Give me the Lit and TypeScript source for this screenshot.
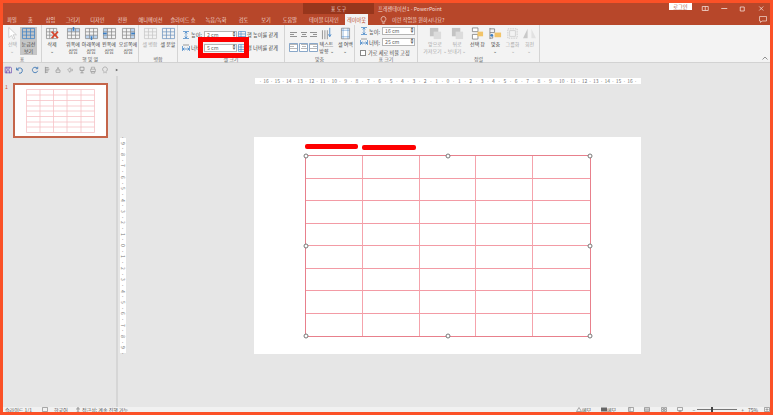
import { LitElement, html, css, svg } from 'lit';
import { customElement } from 'lit/decorators.js';

const tabs = [
  ['파일', 18], ['홈', 19], ['삽입', 21], ['그리기', 24], ['디자인', 25], ['전환', 25],
  ['애니메이션', 31], ['슬라이드 쇼', 34], ['녹음/녹화', 32], ['검토', 23], ['보기', 22], ['도움말', 26],
  ['테이블 디자인', 42], ['레이아웃', 23],
] as const;

const BLUE = '#3b7fc4';
const GREY = '#8a8a8a';
const LIGHT = '#c6c6c6';

// small table glyph: a grid with an optional highlighted band and accent mark
function gridIcon(stroke: string, band = '', accent = '') {
  return svg`<svg class="ico" viewBox="0 0 16 14">
    ${band ? svg`<path d=${band} fill="#bcd4ee"/>` : ''}
    <path d="M1.5 1.5h13v11h-13zM1.5 5.2h13M1.5 8.8h13M5.8 1.5v11M10.2 1.5v11" fill="none" stroke=${stroke} stroke-width=".8"/>
    ${accent ? svg`<path d=${accent} fill="none" stroke=${BLUE} stroke-width="1.6"/>` : ''}
  </svg>`;
}

const deleteIcon = svg`<svg class="ico" viewBox="0 0 16 14">
  <path d="M1.5 1.5h11v11h-11zM1.5 5.2h11M1.5 8.8h11M5 1.5v11M9 1.5v11" fill="none" stroke="#8a8a8a" stroke-width=".8"/>
  <path d="M7 5l7 7M14 5l-7 7" stroke="#d9442b" stroke-width="1.6"/>
</svg>`;

const cursorIcon = svg`<svg class="ico" viewBox="0 0 16 14">
  <path d="M4 .5v11l3-2.4 2 4 1.6-.8-2-3.9h3.6z" fill="#fff" stroke="#c4c4c4" stroke-width=".8"/>
</svg>`;

const stackIcon = svg`<svg class="ico" viewBox="0 0 16 14">
  <rect x="2" y="1" width="9" height="9" fill="#c4c4c4"/><rect x="6" y="5" width="8" height="8" fill="#dcdcdc"/>
</svg>`;

const paneIcon = svg`<svg class="ico" viewBox="0 0 16 14">
  <path d="M2.5 1h6v4h-6zM2.5 8h6v5h-6z" fill="#fff" stroke="#777" stroke-width=".8"/>
  <rect x="8" y="5" width="6" height="5" fill="#f2c469"/>
</svg>`;

const alignIcon = svg`<svg class="ico" viewBox="0 0 16 14">
  <path d="M2 1v12M2 2h5v4h-5M2 9h3v3h-3" fill="none" stroke="#777" stroke-width=".8"/>
  <rect x="7" y="6" width="7" height="5" fill="#f2c469"/><circle cx="4" cy="9" r="1.4" fill="#3b7fc4"/>
</svg>`;

const groupIcon = svg`<svg class="ico" viewBox="0 0 16 14">
  <path d="M3 2h10v10h-10z" fill="none" stroke="#bdbdbd" stroke-width=".8" stroke-dasharray="1.5 1"/>
  <rect x="5" y="4" width="6" height="6" fill="none" stroke="#c8c8c8" stroke-width=".8"/>
</svg>`;

const rotateIcon = svg`<svg class="ico" viewBox="0 0 16 14">
  <path d="M6 2l-5 10h5z" fill="#c9c9c9"/><path d="M10 2l5 10h-5z" fill="#e2e2e2"/>
</svg>`;

const dirIcon = svg`<svg class="ico" viewBox="0 0 14 16">
  <path d="M2 15V4M5 15V4M8 15V4" stroke="#777" stroke-width=".9"/><path d="M11 1v10M9.400 9l1.600 3 1.600-3" fill="none" stroke="#3b7fc4"/>
</svg>`;

const marginIcon = svg`<svg class="ico" viewBox="0 0 14 16">
  <path d="M2 1.500h10v13h-10z" fill="#fff" stroke="#777" stroke-width=".8"/><path d="M4 1.500v13M10 1.500v13M2 4h10M2 12h10" stroke="#3b7fc4" stroke-width=".6"/>
</svg>`;

function sizeIcon(vertical: boolean) {
  return vertical
    ? svg`<svg class="mini" viewBox="0 0 8 8"><path d="M1 .5h6M1 7.5h6M4 1v6M2.6 2.4 4 1l1.400 1.400M2.600 5.600 4 7l1.400-1.400" fill="none" stroke="#3b7fc4" stroke-width=".7"/></svg>`
    : svg`<svg class="mini" viewBox="0 0 8 8"><path d="M.5 2v5M7.500 2v5M1 5h6M2.400 3.600 1 5l1.400 1.400M5.600 3.600 7 5 5.600 6.400" fill="none" stroke="#3b7fc4" stroke-width=".7"/><path d="M1 1h6" stroke="#777" stroke-width=".7"/></svg>`;
}

const equalIcon = svg`<svg class="mini" viewBox="0 0 8 8"><path d="M.5.5h7v7h-7zM.5 3h7M.5 5.500h7M3 .5v7" fill="none" stroke="#3b7fc4" stroke-width=".6"/></svg>`;

const alignCells = [
  'M1 1.500h7M1 3.500h4M1 5.500h7', 'M2 1.500h6M3 3.500h4M2 5.500h6', 'M1 1.500h7M4 3.500h4M1 5.500h7',
];

const qatIcons = [
  svg`<path d="M1.500 1.500h7l1 1v6h-8zM3.500 1.500v2.500h3V1.500M3 9V6h4v3" fill="none" stroke="#6a4bb0" stroke-width=".9"/>`,
  svg`<path d="M2 2v3h3M2.500 5A3.400 3.400 0 1 1 5 9" fill="none" stroke="#2f6db0" stroke-width="1"/>`,
  svg`<path d="M7.600 2.600A3.400 3.400 0 1 0 8.400 6M8.400 1v2.400H6" fill="none" stroke="#2f6db0" stroke-width="1"/>`,
  svg`<path d="M3 1v8M3 2h4M3 4h5M3 6h4M3 8h3" fill="none" stroke="#8b8b8b" stroke-width=".9"/>`,
  svg`<path d="M2.500 5h5v3h-5zM3.500 5 5 1.600 6.500 5" fill="none" stroke="#9a9a9a" stroke-width=".9"/>`,
  svg`<path d="M2 5l3-3v2h3v2H5v2z" fill="none" stroke="#9a9a9a" stroke-width=".8"/>`,
  svg`<path d="M2.500 1.500h5v4h-5zM5 5.500v3M3 8.500h4" fill="none" stroke="#8b8b8b" stroke-width=".9"/>`,
  svg`<path d="M3 4V1.500h4V4M2 4h6v3H2zM3 7h4v2H3z" fill="none" stroke="#9a9a9a" stroke-width=".8"/>`,
  svg`<path d="M3 8.500h1V7a3 3 0 1 1 2 0v1.500h1" fill="none" stroke="#9a9a9a" stroke-width=".8"/>`,
  svg`<path d="M3.500 3.500 6.500 5 3.500 6.500z" fill="#666"/>`,
];

const viewIcons = [
  'M.5.5h5v4h-5zM2 .5v4', 'M.5.5h5v4h-5zM.5 2h5M.5 3.200h5', 'M.5.5h2v1.700h-2zM3.500.5h2v1.700h-2zM.5 2.800h2v1.700h-2zM3.500 2.800h2v1.700h-2z', 'M.5.5h5v3h-5zM3 3.500v1M1.500 4.500h3',
];

@customElement('app-root')
export class AppRoot extends LitElement {
  static styles = css`
    :host {
      display: block;
      width: 773px;
      height: 415px;
      font-family: "Noto Sans CJK KR", "Noto Sans", sans-serif;
      font-size: 5.2px;
      color: #555;
    }
    .frame {
      box-sizing: border-box;
      width: 773px;
      height: 415px;
      padding: 3px;
      background: #fb5127;
      display: flex;
      flex-direction: column;
      overflow: hidden;
    }
    .title {
      height: 11px;
      flex: none;
      background: #b7472a;
      display: flex;
      align-items: flex-start;
      color: #f4ddd5;
      line-height: 11px;
    }
    .title-spacer { width: 300px; }
    .tools {
      width: 71px;
      height: 11px;
      background: #97361c;
      text-align: center;
    }
    .doc { margin-left: 4px; flex: 1; }
    .login {
      width: 23px;
      height: 7px;
      background: #fff;
      color: #a0492f;
      line-height: 7px;
      text-align: center;
    }
    .win { display: flex; margin: 2px 0 0 4px; }
    .win svg { width: 18.5px; height: 7px; }
    .tabs {
      height: 11px;
      flex: none;
      background: #b7472a;
      display: flex;
      color: #f2d9d1;
      line-height: 11px;
    }
    .tab { text-align: center; white-space: nowrap; }
    .tab.on { background: #f3f3f3; color: #b7472a; }
    .tell { margin-left: 12px; display: flex; align-items: center; gap: 5px; flex: 1; }
    .tell svg { width: 7px; height: 8px; }
    .comment { width: 8px; height: 7px; margin: 2px 3px 0 0; }
    .ribbon {
      height: 38px;
      flex: none;
      box-sizing: border-box;
      background: #f3f3f3;
      border-bottom: 1px solid #d2d2d2;
      display: flex;
      position: relative;
    }
    .group {
      box-sizing: border-box;
      height: 37px;
      border-right: 1px solid #d4d4d4;
      display: flex;
      flex-direction: column;
      flex: none;
    }
    .group-body { height: 30px; display: flex; padding-top: 2px; box-sizing: border-box; }
    .group-name { height: 7px; line-height: 7px; text-align: center; color: #666; font-size: 5px; }
    .btn {
      display: flex;
      flex-direction: column;
      align-items: center;
      flex: none;
      height: 28px;
      line-height: 7px;
      font-size: 5px;
      text-align: center;
      color: #444;
      white-space: nowrap;
    }
    .btn.off { color: #a8a8a8; }
    .btn.sel { background: #c6c6c6; }
    .pad { flex: none; }
    .ico { width: 15px; height: 13px; flex: none; }
    .mini { width: 8px; height: 8px; flex: none; }
    .fields { display: flex; flex-direction: column; gap: 4px; padding: 3px 0 0 4px; }
    .fields.table-size { gap: 3px; padding: 0 0 0 5px; }
    .field { display: flex; align-items: center; gap: 1px; height: 9px; white-space: nowrap; color: #444; }
    .field .lab { width: 12px; }
    .spin {
      box-sizing: border-box;
      width: 33px;
      height: 8px;
      background: #fff;
      border: 1px solid #b5b5b5;
      line-height: 6px;
      padding-left: 2px;
      color: #666;
      display: flex;
      justify-content: space-between;
    }
    .arrows { width: 4px; color: #666; font-size: 3px; line-height: 3px; text-align: center; }
    .check { display: flex; align-items: center; gap: 2px; height: 7px; white-space: nowrap; color: #444; }
    .box { width: 4px; height: 4px; background: #fff; border: 1px solid #888; }
    .cellgrid { display: grid; grid-template-columns: repeat(3, 10px); grid-auto-rows: 13px; padding: 3px 0 0 4px; }
    .cellgrid svg { width: 9px; height: 9px; }
    .highlight {
      position: absolute;
      left: 195px;
      top: 12px;
      width: 51px;
      height: 21px;
      box-sizing: border-box;
      border: 5px solid #fd0000;
    }
    .collapse { position: absolute; right: 2px; bottom: 2px; width: 6px; height: 4px; }
    .work { flex: 1; min-height: 0; background: #e6e6e6; display: flex; flex-direction: column; }
    .qat { height: 13px; flex: none; display: flex; align-items: center; padding-left: 2px; }
    .qat svg { width: 8px; height: 8px; margin-right: 3.7px; flex: none; }
    .qat svg:first-child { margin-left: -1px; margin-right: 3px; }
    .qat svg:nth-child(2) { margin-right: 8px; }
    .panes { flex: 1; min-height: 0; display: flex; }
    .thumbs {
      box-sizing: border-box;
      width: 115px;
      flex: none;
      border-right: 2px solid #d6d6d6;
      display: flex;
      gap: 6px;
      padding: 7px 0 0 2px;
    }
    .num { color: #c8552f; line-height: 7px; width: 2px; }
    .thumb {
      box-sizing: border-box;
      width: 95px;
      height: 55px;
      border: 2px solid #c4654a;
      background: #fff;
      display: flex;
      justify-content: center;
      padding-top: 4px;
    }
    .thumb svg { width: 69px; height: 44px; }
    .editor { flex: 1; min-width: 0; display: flex; flex-direction: column; }
    .hruler {
      width: 386px;
      height: 6px;
      margin: 2px 0 0 137px;
      background: #fff;
      display: flex;
      justify-content: center;
      flex: none;
      font-size: 5px;
      line-height: 6px;
      color: #777;
    }
    .hruler span { width: 5.7px; text-align: center; flex: none; white-space: nowrap; }
    .stage { display: flex; margin-top: 53px; padding-left: 2px; }
    .vruler {
      width: 6px;
      height: 215px;
      background: #fff;
      margin-top: 1px;
      display: flex;
      flex-direction: column;
      justify-content: center;
      align-items: center;
      font-size: 5px;
      color: #777;
      flex: none;
    }
    .vruler span { height: 5.7px; line-height: 6px; writing-mode: vertical-rl; text-align: center; flex: none; white-space: nowrap; }
    .slide {
      width: 387px;
      height: 217px;
      margin-left: 128px;
      background: #fff;
      flex: none;
      display: flex;
      flex-direction: column;
      padding-left: 51px;
      box-sizing: border-box;
    }
    .marks { display: flex; gap: 4px; height: 18px; padding-top: 6.5px; box-sizing: border-box; }
    .mark { width: 53px; height: 5px; border-radius: 2px; background: #fd0000; }
    .mark + .mark { margin-top: 1px; width: 54px; }
    .table {
      position: relative;
      width: 286px;
      height: 182px;
      box-sizing: border-box;
      border: 1px solid #e8808c;
      display: grid;
      grid-template-columns: repeat(5, 1fr);
      grid-template-rows: repeat(8, 1fr);
    }
    .cell { border-right: 1px solid #f5a3ac; border-bottom: 1px solid #f39ba5; }
    .cell.endc { border-right: none; }
    .cell.endr { border-bottom: none; }
    .handle {
      position: absolute;
      width: 3px;
      height: 3px;
      border: 1px solid #777;
      border-radius: 50%;
      background: #fff;
      transform: translate(-50%, -50%);
    }
    .status {
      height: 5px;
      flex: none;
      background: #f1f1f1;
      display: flex;
      align-items: center;
      line-height: 5px;
      overflow: hidden;
      white-space: nowrap;
      color: #555;
      font-size: 5px;
    }
    .status span { flex: none; }
    .status svg { width: 6px; height: 5px; flex: none; }
    .st-a { margin-left: 2px; width: 37px; }
    .st-b { margin-left: 6px; width: 21px; }
    .st-c { margin-left: 1px; width: 70px; }
    .st-spacer { flex: 1; }
    .st-notes { width: 19px; }
    .st-memo { width: 12px; }
    .st-views { display: flex; gap: 10.5px; margin: 0 9px; flex: none; }
    .slider { width: 40px; height: 1px; background: #777; position: relative; flex: none; margin: 0 4px 0 2px; }
    .knob { position: absolute; left: 14px; top: -2px; width: 2px; height: 5px; background: #444; }
    .st-zoom { margin-left: 4px; width: 16px; }
  `;

  private btn(icon: unknown, label: unknown, width: number, cls = '') {
    return html`<div class="btn ${cls}" style="width:${width}px">${icon}<div>${label}</div></div>`;
  }

  private spin(value: string) {
    return html`<div class="spin">${value}<div class="arrows">▲<br />▼</div></div>`;
  }

  private group(name: string, width: number, body: unknown) {
    return html`<div class="group" style="width:${width}px">
      <div class="group-body">${body}</div>
      <div class="group-name">${name}</div>
    </div>`;
  }

  private pad(width: number) {
    return html`<div class="pad" style="width:${width}px"></div>`;
  }

  private renderRibbon() {
    const addGrid = (band: string, accent: string) => gridIcon(GREY, band, accent);
    return html`<div class="ribbon">
      ${this.group('표', 39, html`
        ${this.pad(2)}
        ${this.btn(cursorIcon, html`선택<br />⌄`, 15, 'off')}
        ${this.btn(gridIcon(BLUE), html`눈금선<br />보기`, 17, 'sel')}`)}
      ${this.group('행 및 열', 97, html`
        ${this.pad(2)}
        ${this.btn(deleteIcon, html`삭제<br />⌄`, 16)}
        ${this.pad(4)}
        ${this.btn(addGrid('M1.5 1.5h13v3.7h-13z', 'M8 0v4'), html`위쪽에<br />삽입`, 18)}
        ${this.btn(addGrid('M1.5 8.8h13v3.7h-13z', 'M8 10v4'), html`아래쪽에<br />삽입`, 18)}
        ${this.btn(addGrid('M1.5 1.5h4.3v11h-4.3z', 'M1 7h4'), html`왼쪽에<br />삽입`, 18)}
        ${this.btn(addGrid('M10.2 1.5h4.3v11h-4.3z', 'M11 7h4'), html`오른쪽에<br />삽입`, 20)}`)}
      ${this.group('병합', 39, html`
        ${this.pad(2)}
        ${this.btn(gridIcon(LIGHT), '셀 병합', 18, 'off')}
        ${this.btn(gridIcon('#6d93bd'), '셀 분할', 18)}`)}
      ${this.group('셀 크기', 107, html`
        <div class="fields">
          <div class="field">${sizeIcon(true)}<span class="lab">높이:</span>${this.spin('2 cm')}${equalIcon}<span>행 높이를 같게</span></div>
          <div class="field">${sizeIcon(false)}<span class="lab">너비:</span>${this.spin('5 cm')}${equalIcon}<span>열 너비를 같게</span></div>
        </div>`)}
      ${this.group('맞춤', 70, html`
        <div class="cellgrid">
          ${alignCells.map(d => svg`<svg viewBox="0 0 9 7"><path d=${d} stroke="#888" stroke-width=".9" fill="none"/></svg>`)}
          ${alignCells.map(d => svg`<svg viewBox="0 0 9 9"><path d="M.5.5h8v8h-8z" fill="#fff" stroke="#6d93bd" stroke-width=".8"/><path d=${d} stroke="#888" stroke-width=".6" fill="none"/></svg>`)}
        </div>
        ${this.btn(dirIcon, html`텍스트<br />방향 ⌄`, 15)}
        ${this.pad(3)}
        ${this.btn(marginIcon, html`셀 여백<br />⌄`, 17)}`)}
      ${this.group('표 크기', 63, html`
        <div class="fields table-size">
          <div class="field">${sizeIcon(true)}<span class="lab">높이:</span>${this.spin('16 cm')}</div>
          <div class="field">${sizeIcon(false)}<span class="lab">너비:</span>${this.spin('25 cm')}</div>
          <div class="check"><span class="box"></span>가로 세로 비율 고정</div>
        </div>`)}
      ${this.group('정렬', 122, html`
        ${this.pad(6)}
        ${this.btn(stackIcon, html`앞으로<br />가져오기 ⌄`, 22, 'off')}
        ${this.btn(stackIcon, html`뒤로<br />보내기 ⌄`, 22, 'off')}
        ${this.btn(paneIcon, '선택 창', 19)}
        ${this.btn(alignIcon, html`맞춤<br />⌄`, 17)}
        ${this.btn(groupIcon, html`그룹화<br />⌄`, 17, 'off')}
        ${this.btn(rotateIcon, html`회전<br />⌄`, 17, 'off')}`)}
      <div class="highlight"></div>
      <svg class="collapse" viewBox="0 0 6 4"><path d="M.5 3.500 3 1l2.500 2.500" fill="none" stroke="#777" stroke-width=".8"/></svg>
    </div>`;
  }

  private renderTable() {
    const cells = [];
    for (let r = 0; r < 8; r++) {
      for (let c = 0; c < 5; c++) {
        cells.push(html`<div class="cell ${c === 4 ? 'endc' : ''} ${r === 7 ? 'endr' : ''}"></div>`);
      }
    }
    const spots = [[0, 0], [50, 0], [100, 0], [0, 50], [100, 50], [0, 100], [50, 100], [100, 100]];
    return html`<div class="table">
      ${cells}
      ${spots.map(([x, y]) => html`<div class="handle" style="left:${x}%;top:${y}%"></div>`)}
    </div>`;
  }

  // ruler numbers with a tick dot between each pair
  private ticks(max: number) {
    const out = [];
    for (let i = -max; i <= max; i++) {
      out.push(html`<span>·</span><span>${Math.abs(i)}</span>`);
    }
    out.push(html`<span>·</span>`);
    return out;
  }

  private renderStatus() {
    return html`<div class="status">
      <span class="st-a">슬라이드 1/1</span>
      <svg viewBox="0 0 6 5"><path d="M.5.5h5v4h-5z" fill="none" stroke="#777" stroke-width=".6"/></svg>
      <span class="st-b">한국어</span>
      <svg viewBox="0 0 6 5"><circle cx="3" cy="1" r=".8" fill="#777"/><path d="M1 2h4M3 2v1.500M2 5l1-1.500L4 5" fill="none" stroke="#777" stroke-width=".6"/></svg>
      <span class="st-c">접근성: 계속 진행 가능</span>
      <div class="st-spacer"></div>
      <svg viewBox="0 0 6 5"><path d="M3 .5 5.500 4.500h-5z" fill="none" stroke="#777" stroke-width=".6"/></svg>
      <span class="st-notes">메모</span>
      <svg viewBox="0 0 6 5"><path d="M0 .5h6v4H0z" fill="#666"/></svg>
      <span class="st-memo">메모</span>
      <div class="st-views">
        ${viewIcons.map(d => svg`<svg viewBox="0 0 6 5"><path d=${d} fill="none" stroke="#777" stroke-width=".6"/></svg>`)}
      </div>
      <span>−</span>
      <div class="slider"><div class="knob"></div></div>
      <span>+</span>
      <span class="st-zoom">75%</span>
      <svg viewBox="0 0 6 5"><path d="M.5.5h5v4h-5zM2 2h2v1H2z" fill="none" stroke="#777" stroke-width=".6"/></svg>
    </div>`;
  }

  render() {
    return html`<div class="frame">
      <div class="title">
        <div class="title-spacer"></div>
        <div class="tools">표 도구</div>
        <div class="doc">프레젠테이션1 - PowerPoint</div>
        <div class="login">로그인</div>
        <div class="win">
          <svg viewBox="0 0 18 7"><path d="M6 1.500h6v4H6zM9 1.500v4" fill="none" stroke="#f4ddd5" stroke-width=".8"/></svg>
          <svg viewBox="0 0 18 7"><path d="M6 3.500h6" stroke="#f4ddd5" stroke-width=".8"/></svg>
          <svg viewBox="0 0 18 7"><path d="M7 2h4v4H7z" fill="none" stroke="#f4ddd5" stroke-width=".8"/></svg>
          <svg viewBox="0 0 18 7"><path d="M7 1.500l4 4M11 1.500l-4 4" stroke="#f4ddd5" stroke-width=".8"/></svg>
        </div>
      </div>
      <div class="tabs">
        ${tabs.map(([t, w], i) => html`<div class="tab ${i === 13 ? 'on' : ''}" style="width:${w}px">${t}</div>`)}
        <div class="tell">
          <svg viewBox="0 0 7 8"><path d="M3.500.5a2.400 2.400 0 0 0-1.300 4.400V6h2.600V4.900A2.400 2.400 0 0 0 3.500.5zM2.400 7.300h2.200" fill="none" stroke="#f4ddd5" stroke-width=".7"/></svg>
          이런 작업을 원하시나요?
        </div>
        <svg class="comment" viewBox="0 0 8 7"><path d="M.5.5h7v4.500H3L1.500 6.500V5h-1z" fill="none" stroke="#f4ddd5" stroke-width=".7"/></svg>
      </div>
      ${this.renderRibbon()}
      <div class="work">
        <div class="qat">
          ${qatIcons.map(p => svg`<svg viewBox="0 0 10 10">${p}</svg>`)}
        </div>
        <div class="panes">
          <div class="thumbs">
            <div class="num">1</div>
            <div class="thumb">
              <svg viewBox="0 0 69 44">
                <path d="M.5.5h68v43H.5zM.5 6h68M.5 11.500h68M.5 17h68M.5 22h68M.5 27.500h68M.5 33h68M.5 38h68M14 .5v43M27.500.5v43M41 .5v43M55 .5v43" fill="none" stroke="#f6c3c6" stroke-width=".8"/>
              </svg>
            </div>
          </div>
          <div class="editor">
            <div class="hruler">${this.ticks(16)}</div>
            <div class="stage">
              <div class="vruler">${this.ticks(9)}</div>
              <div class="slide">
                <div class="marks"><div class="mark"></div><div class="mark"></div></div>
                ${this.renderTable()}
              </div>
            </div>
          </div>
        </div>
      </div>
      ${this.renderStatus()}
    </div>`;
  }
}
